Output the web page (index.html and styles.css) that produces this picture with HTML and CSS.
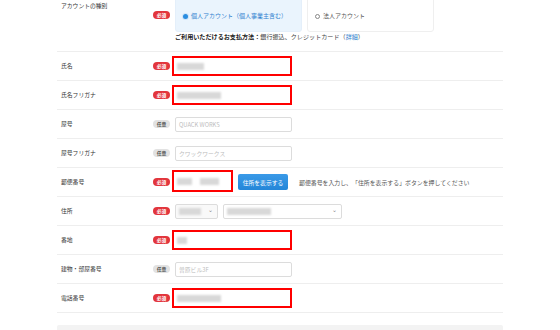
FILE: index.html
```html
<!DOCTYPE html>
<html lang="ja">
<head>
<meta charset="utf-8">
<title>Form</title>
<link rel="stylesheet" href="styles.css">
</head>
<body>
<div class="form">
  <div class="row row-account">
    <div class="label">アカウントの種別</div>
    <div class="badge-cell"><span class="badge req">必須</span></div>
    <div class="field field-account">
      <div class="radios">
        <div class="radio on"><span class="dot"></span>個人アカウント（個人事業主含む）</div>
        <div class="radio"><span class="circle"></span>法人アカウント</div>
      </div>
      <p class="note"><b>ご利用いただけるお支払方法：</b>銀行振込、クレジットカード（<span class="link">詳細</span>）</p>
    </div>
  </div>

  <div class="row">
    <div class="label">氏名</div>
    <div class="badge-cell"><span class="badge req">必須</span></div>
    <div class="field"><div class="input hl"><span class="blur w27"></span></div></div>
  </div>

  <div class="row">
    <div class="label">氏名フリガナ</div>
    <div class="badge-cell"><span class="badge req">必須</span></div>
    <div class="field"><div class="input hl"><span class="blur w44"></span></div></div>
  </div>

  <div class="row">
    <div class="label">屋号</div>
    <div class="badge-cell"><span class="badge opt">任意</span></div>
    <div class="field"><div class="input"><span class="ph">QUACK WORKS</span></div></div>
  </div>

  <div class="row">
    <div class="label">屋号フリガナ</div>
    <div class="badge-cell"><span class="badge opt">任意</span></div>
    <div class="field"><div class="input"><span class="ph">クワックワークス</span></div></div>
  </div>

  <div class="row">
    <div class="label">郵便番号</div>
    <div class="badge-cell"><span class="badge req">必須</span></div>
    <div class="field">
      <div class="input hl zip"><span class="blur w15"></span><span class="blur w19 gap"></span></div>
      <button class="btn">住所を表示する</button>
      <span class="hint">郵便番号を入力し、「住所を表示する」ボタンを押してください</span>
    </div>
  </div>

  <div class="row">
    <div class="label">住所</div>
    <div class="badge-cell"><span class="badge req">必須</span></div>
    <div class="field">
      <div class="select s1"><span class="blur w22"></span><span class="chev">⌄</span></div>
      <div class="select s2"><span class="blur w44"></span><span class="chev">⌄</span></div>
    </div>
  </div>

  <div class="row">
    <div class="label">番地</div>
    <div class="badge-cell"><span class="badge req">必須</span></div>
    <div class="field"><div class="input hl"><span class="blur w10"></span></div></div>
  </div>

  <div class="row">
    <div class="label">建物・部屋番号</div>
    <div class="badge-cell"><span class="badge opt">任意</span></div>
    <div class="field"><div class="input"><span class="ph">曽原ビル3F</span></div></div>
  </div>

  <div class="row">
    <div class="label">電話番号</div>
    <div class="badge-cell"><span class="badge req">必須</span></div>
    <div class="field"><div class="input hl"><span class="blur w44"></span></div></div>
  </div>

  <div class="footer-box"></div>
</div>
</body>
</html>
```

FILE: styles.css
```css
* { box-sizing: border-box; }
html, body { margin: 0; padding: 0; background: #fff; }
body {
  font-family: "Noto Sans CJK JP", "Noto Sans", sans-serif;
  font-size: 6px;
  color: #333;
  overflow: hidden;
  height: 330px;
}
.form {
  margin: -10px 0 0 57px;
  width: 446px;
}
.row {
  display: grid;
  grid-template-columns: 92px 22px 1fr;
  align-items: center;
  height: 29px;
  padding-left: 4px;
  border-bottom: 1px solid #eeeeee;
}
.label {
  font-size: 5.8px;
  line-height: 8px;
  color: #333;
  white-space: nowrap;
}
.badge-cell { display: flex; }
.badge {
  display: inline-flex;
  align-items: center;
  justify-content: center;
  width: 17px;
  height: 8px;
  border-radius: 4px;
  font-size: 4.8px;
  line-height: 8px;
  font-weight: bold;
}
.badge.req { background: #e2353c; color: #fff; }
.badge.opt { background: #e2e2e2; color: #555; }

.field {
  display: flex;
  align-items: center;
}
.row.row-account {
  height: 62px;
  align-items: start;
}
.row-account .label { padding-top: 12px; }
.row-account .badge-cell { padding-top: 21px; }
.field.field-account {
  flex-direction: column;
  align-items: flex-start;
}
.radios { display: flex; gap: 5px; }
.radio {
  width: 127px;
  height: 42px;
  padding: 21px 0 0 7px;
  font-size: 6px;
  line-height: 8px;
  border-radius: 3px;
  display: flex;
  align-items: flex-start;
  gap: 3px;
  color: #555;
  border: 1px solid #efefef;
  white-space: nowrap;
}
.radio.on {
  background: #eaf4fd;
  border-color: #e4effa;
  color: #2f7fcf;
}
.dot, .circle {
  width: 5px; height: 5px;
  border-radius: 50%;
  margin-top: 1.5px;
  flex: none;
}
.dot { background: #2a8de0; box-shadow: 0 0 0 1px #cfe4f8; }
.circle { border: 0.8px solid #888; background: #fff; }
.note {
  margin: 1px 0 0;
  font-size: 6.1px;
  line-height: 8px;
  color: #444;
  white-space: nowrap;
}
.note b { color: #222; font-weight: bold; }
.link { color: #2f7fcf; }

.input {
  width: 117px;
  height: 15px;
  border: 1px solid #dcdcdc;
  border-radius: 2px;
  background: #fff;
  display: flex;
  align-items: center;
  padding-left: 3px;
}
.input.hl {
  width: 120px;
  height: 20px;
  margin-left: -3px;
  border: 2.5px solid #ff0000;
  border-radius: 0;
  padding-left: 3px;
}
.input.zip {
  width: 61px;
  height: 22px;
  margin-top: -2px;
  padding-left: 3px;
}
.ph { color: #bdbdbd; font-size: 5.8px; white-space: nowrap; }
.blur {
  display: inline-block;
  height: 7px;
  background: #d8d8d8;
  filter: blur(1.2px);
}
.blur.gap { margin-left: 8px; }
.w10 { width: 10px; }
.w15 { width: 15px; }
.w19 { width: 19px; }
.w22 { width: 22px; }
.w27 { width: 27px; }
.w44 { width: 44px; }

.btn {
  margin-left: 5px;
  width: 50px;
  height: 16px;
  border: 0;
  border-radius: 2px;
  background: linear-gradient(#3a9ae8, #2486d8);
  color: #fff;
  font-family: inherit;
  font-size: 5.8px;
  padding: 0;
}
.hint {
  margin-left: 11px;
  font-size: 5.9px;
  color: #555;
  white-space: nowrap;
}
.select {
  height: 15px;
  border: 1px solid #dcdcdc;
  border-radius: 2px;
  background: #f9f9f9;
  display: flex;
  align-items: center;
  justify-content: space-between;
  padding: 0 4px 0 3px;
}
.select.s1 { width: 43px; }
.select.s2 { width: 119px; margin-left: 5px; background: #fff; }
.chev {
  color: #888;
  font-size: 6px;
  line-height: 6px;
  margin-top: -3px;
}
.footer-box {
  margin-top: 12px;
  height: 20px;
  background: #f3f3f3;
  border-radius: 2px;
}
```
